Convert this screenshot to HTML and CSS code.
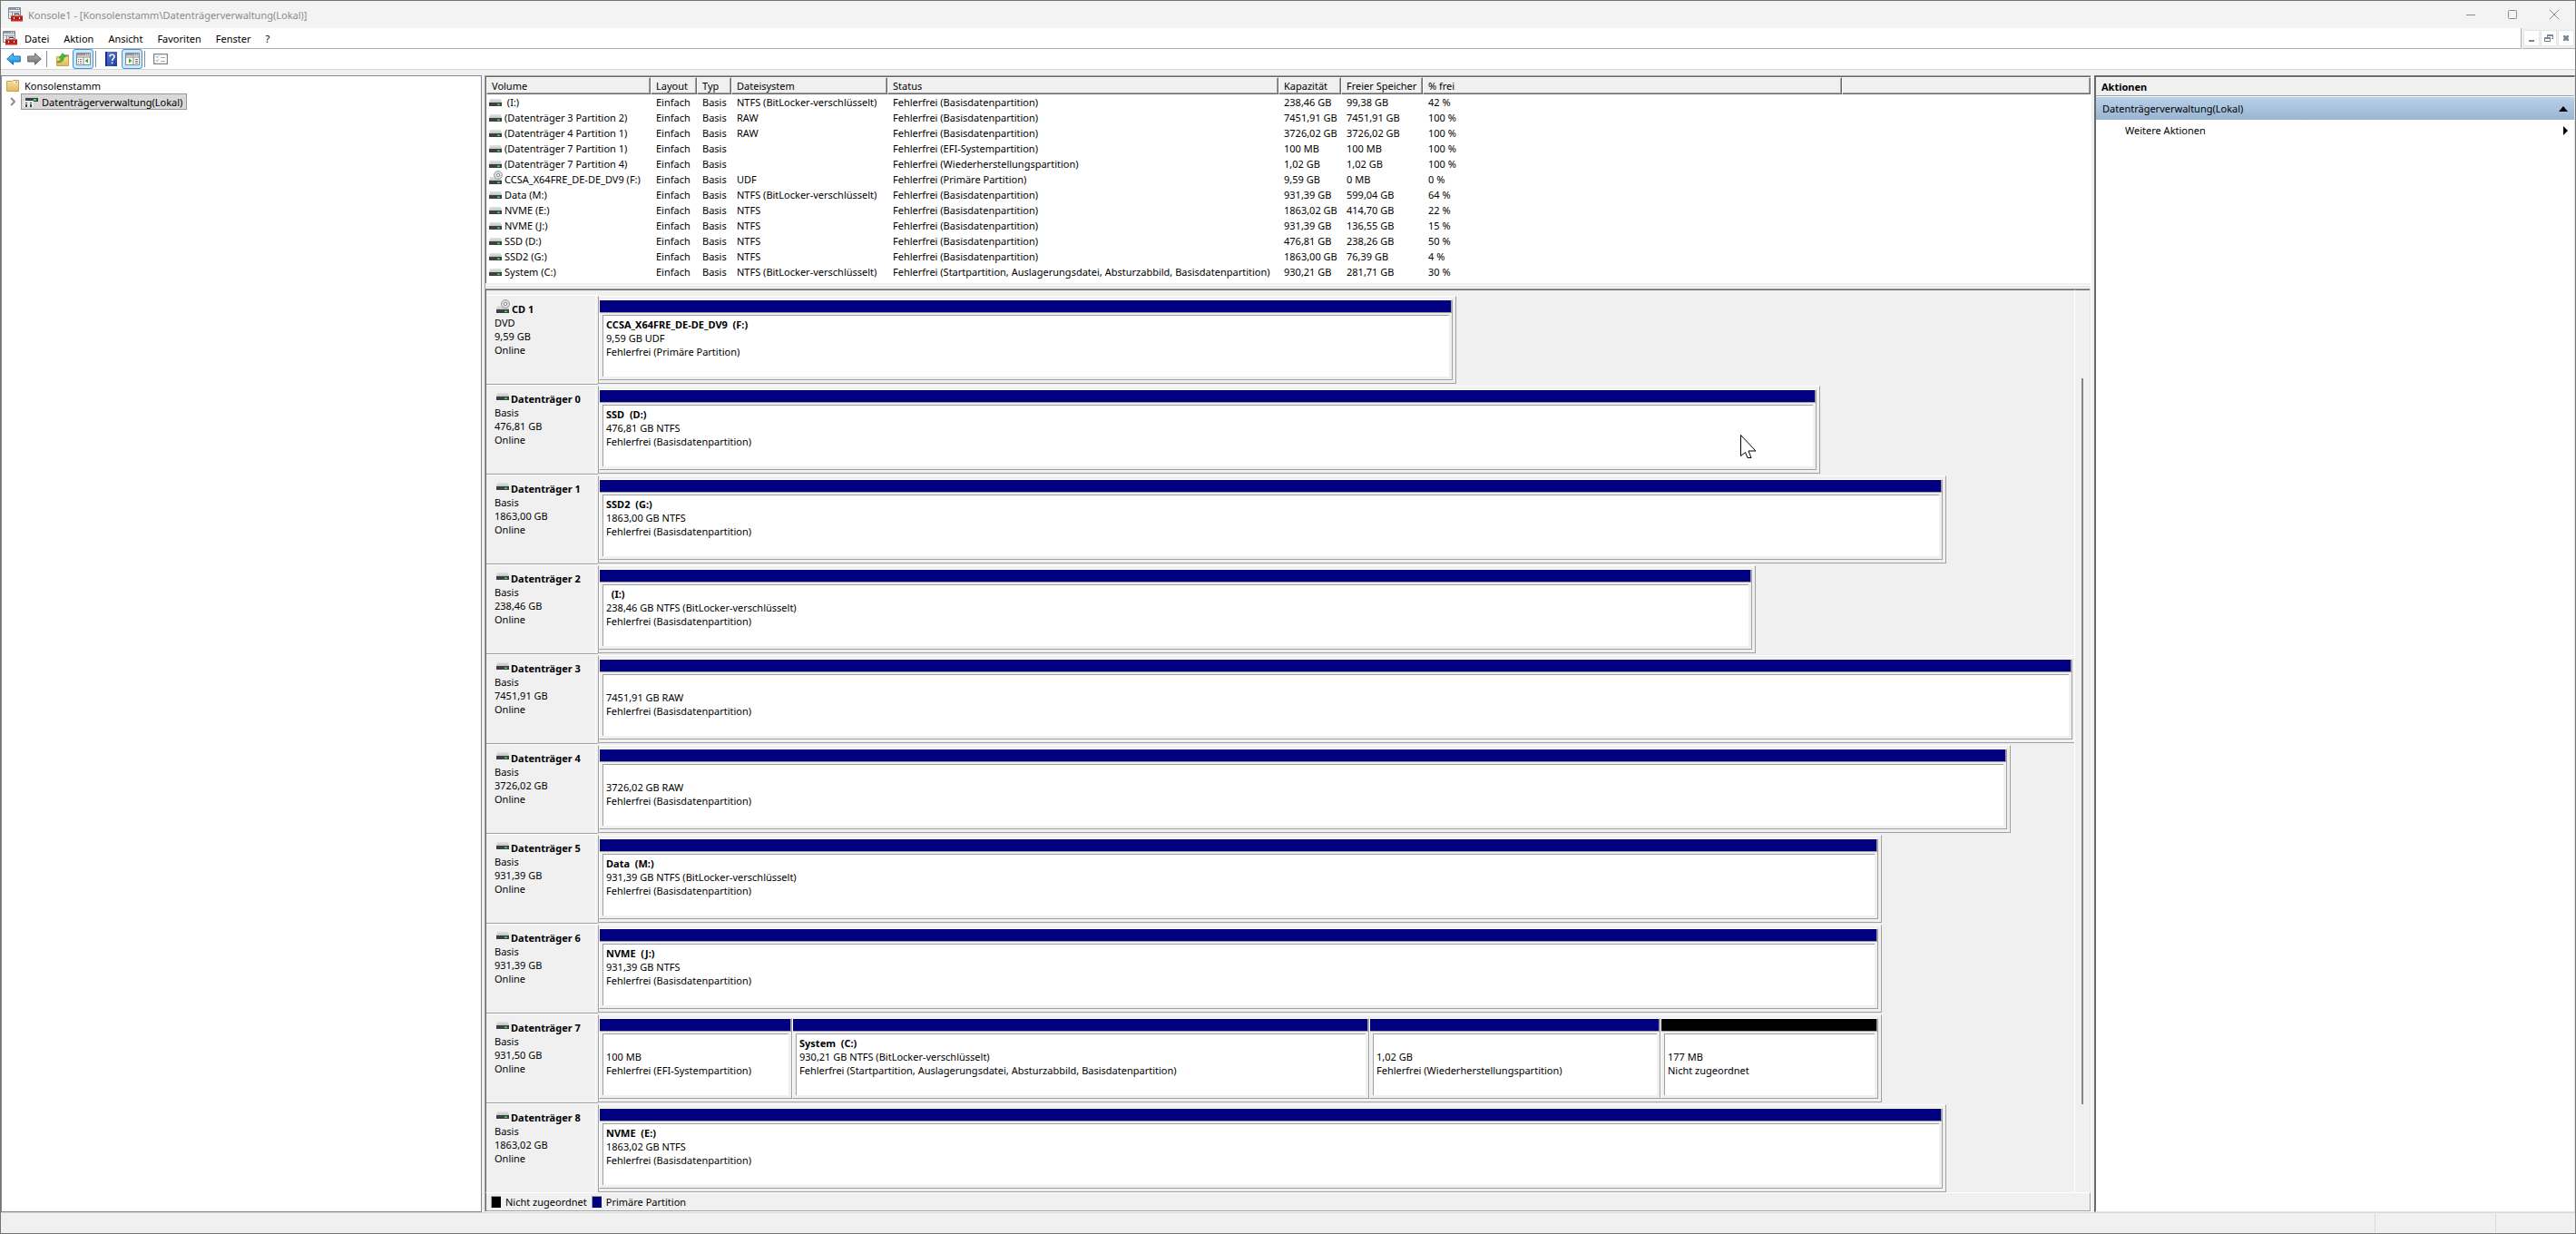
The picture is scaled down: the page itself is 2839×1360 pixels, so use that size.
FILE: index.html
```html
<!DOCTYPE html>
<html lang="de">
<head>
  <meta charset="utf-8" />
  <title>Konsole1 - [Konsolenstamm\Datenträgerverwaltung(Lokal)]</title>
  <meta name="viewport" content="width=device-width, initial-scale=1.0">
  <link rel="stylesheet" href="styles.css">
</head>
<body>
  <!-- shared icons -->
  <svg class="sprite" aria-hidden="true">
    <defs>
      <linearGradient id="gLid" x1="0" y1="0" x2="0" y2="1">
        <stop offset="0" stop-color="#e2e3e6"/><stop offset="1" stop-color="#c3c5ca"/>
      </linearGradient>
      <linearGradient id="gFolder" x1="0" y1="0" x2="0" y2="1">
        <stop offset="0" stop-color="#fbe3a0"/><stop offset="1" stop-color="#e3b95c"/>
      </linearGradient>
      <linearGradient id="gBack" x1="0" y1="0" x2="0" y2="1">
        <stop offset="0" stop-color="#6fd0f8"/><stop offset="1" stop-color="#1583d6"/>
      </linearGradient>
      <linearGradient id="gFwd" x1="0" y1="0" x2="0" y2="1">
        <stop offset="0" stop-color="#b4b4b4"/><stop offset="1" stop-color="#6e6e6e"/>
      </linearGradient>
      <linearGradient id="gHelp" x1="0" y1="0" x2="1" y2="1">
        <stop offset="0" stop-color="#5b86e0"/><stop offset="1" stop-color="#1c36a0"/>
      </linearGradient>
    </defs>
    <symbol id="i-disk" viewBox="0 0 14 8">
      <path d="M1 0h12l1 4H0z" fill="url(#gLid)"/>
      <path d="M0 4h14v4H0z" fill="#3d3f42"/>
      <path d="M9 5.500h3v1.500H9z" fill="#3fe04a"/>
    </symbol>
    <symbol id="i-cd" viewBox="0 0 15 15">
      <path d="M1 7h12l1 4H0z" fill="url(#gLid)"/>
      <path d="M0 11h14v4H0z" fill="#3d3f42"/>
      <path d="M9 12.500h3V14H9z" fill="#3fe04a"/>
      <circle cx="10" cy="5" r="4.500" fill="#d9dbde" stroke="#9b9da1"/>
      <circle cx="10" cy="5" r="1.600" fill="#fff" stroke="#8d8f93"/>
    </symbol>
    <symbol id="i-mmc" viewBox="0 0 16 16">
      <path d="M.5.500h13v12H.5z" fill="#fff" stroke="#7d8794"/>
      <path d="M1 1h12v2H1z" fill="#8d99a8"/>
      <path d="M9 1.500h1M11 1.500h1" stroke="#fff"/>
      <path d="M1 5h12M4.500 5v7" stroke="#7d8794"/>
      <path d="M2 7.500h1M2 9.500h1M6 6.500h6" stroke="#a3adba"/>
      <path d="M7 10V7.500h5V10" fill="none" stroke="#45484d"/>
      <path d="M3 9h13v6.500H3z" fill="#c5261f"/>
      <path d="M3 9.500h13" stroke="#e2574f"/>
      <path d="M3 12h13" stroke="#8d1410"/>
      <path d="M6 11h1v2H6zM12 11h1v2h-1z" fill="#fff"/>
    </symbol>
    <symbol id="i-folder" viewBox="0 0 14 13">
      <path d="M.5 1.500h6l1-1h6v12H.5z" fill="url(#gFolder)" stroke="#c9a150"/>
      <path d="M8.500 2h4v1.500h-4z" fill="#fff"/>
      <path d="M10 2h2v1h-2z" fill="#4aa3e0"/>
    </symbol>
  </svg>

  <div class="window">
    <header class="titlebar">
      <svg class="app-icon" width="16" height="16"><use href="#i-mmc"/></svg>
      <span class="title">Konsole1 - [Konsolenstamm\Datenträgerverwaltung(Lokal)]</span>
      <div class="win-buttons">
        <button aria-label="Minimieren"><svg width="10" height="10"><path d="M0 5.500h10"/></svg></button>
        <button aria-label="Maximieren"><svg width="10" height="10"><rect x=".5" y=".5" width="9" height="9" rx="1"/></svg></button>
        <button aria-label="Schließen"><svg width="10" height="10"><path d="M0 0l10 10M10 0L0 10"/></svg></button>
      </div>
    </header>

    <nav class="menubar">
      <div class="menus">
        <svg class="app-icon" width="16" height="16"><use href="#i-mmc"/></svg>
        <button>Datei</button>
        <button>Aktion</button>
        <button>Ansicht</button>
        <button>Favoriten</button>
        <button>Fenster</button>
        <button>?</button>
      </div>
      <div class="mdi-buttons">
        <button aria-label="Fenster minimieren"><svg width="10" height="10"><path d="M2 7h6v2H2z"/></svg></button>
        <button aria-label="Fenster wiederherstellen"><svg width="10" height="10"><path d="M3 1h7v5H8V5h1V3H4v1H3zM0 4h7v5H0zM1 6v2h5V6z" fill-rule="evenodd"/></svg></button>
        <button aria-label="Fenster schließen"><svg width="10" height="10"><path d="M2 2h2l1 1 1-1h2v2L7 5l1 1v2H6L5 7 4 8H2V6l1-1-1-1z"/></svg></button>
      </div>
    </nav>

    <div class="toolbar">
      <button aria-label="Zurück"><svg width="16" height="14"><path d="M.7 7L7.500.8V4h7.800v6H7.500v3.200z" fill="url(#gBack)" stroke="#1670b8"/></svg></button>
      <button aria-label="Vorwärts"><svg width="16" height="14"><path d="M15.300 7L8.500.8V4H.7v6h7.800v3.200z" fill="url(#gFwd)" stroke="#686868"/></svg></button>
      <span class="sep"></span>
      <button aria-label="Eine Ebene nach oben"><svg width="14" height="15"><path d="M.5 4.500h5l1-2h7v12H.5z" fill="url(#gFolder)" stroke="#c9a150"/><path d="M9 3h4v1.500H9z" fill="#4aa3e0"/><path d="M1 10c3 0 4-2 4-4H3l4-5.500L10.500 5H8.500c0 4-3 6-7 6z" fill="#4fb92b" stroke="#2d8a17" stroke-width=".5"/></svg></button>
      <button class="on" aria-label="Konsolenstruktur ein-/ausblenden"><svg width="16" height="14"><path d="M.5.500h15v13H.5z" fill="#fff" stroke="#858585"/><path d="M1 1h14v2.500H1z" fill="#999"/><path d="M10 2h1M12 2h1M14 2h1" stroke="#fff"/><path d="M1 5h14M8 5v8" stroke="#858585"/><path d="M2 7.500h1M2 9.500h1M2 11.500h1M4 7.500h2M4 9.500h2M4 11.500h2" stroke="#777"/><path d="M13 6.500v5L9.500 9z" fill="#3aa820"/></svg></button>
      <span class="sep"></span>
      <button aria-label="Hilfe"><svg width="13" height="16"><path d="M0 0h13v16H0z" fill="url(#gHelp)"/><path d="M0 0h2v16H0z" fill="#1a2f8c"/><path d="M5 5.500c0-3 5-3 5 0 0 2-2.400 2-2.400 4.500M7.600 11.500v1.700" stroke="#fff" stroke-width="1.600" fill="none"/></svg></button>
      <button class="on" aria-label="Aktionsbereich ein-/ausblenden"><svg width="16" height="14"><path d="M.5.500h15v13H.5z" fill="#fff" stroke="#858585"/><path d="M1 1h14v2.500H1z" fill="#999"/><path d="M10 2h1M12 2h1M14 2h1" stroke="#fff"/><path d="M1 5h14M9 5v8" stroke="#858585"/><path d="M11 7.500h3M11 9.500h3M11 11.500h3" stroke="#777"/><path d="M4 6.500v5L7.500 9z" fill="#3aa820"/></svg></button>
      <span class="sep"></span>
      <button aria-label="Einstellungen"><svg width="16" height="12"><path d="M.5.500h15v11H.5z" fill="#fff" stroke="#858585" stroke-width="1.500"/><path d="M3 3.500l1 1 2-2M3 7.500l1 1 2-2" fill="none" stroke="#2f8fe0"/><path d="M8 4.500h5M8 8.500h5" stroke="#aaa"/></svg></button>
    </div>

    <main class="panes">
      <aside class="tree">
        <div class="tree-row">
          <svg width="14" height="13"><use href="#i-folder"/></svg>
          <span>Konsolenstamm</span>
        </div>
        <div class="tree-row tree-child">
          <svg class="chevron" width="6" height="10"><path d="M1 1l4 4-4 4"/></svg>
          <button class="tree-selected">
            <svg width="16" height="14"><path d="M3 0h12l1 3H2z" fill="url(#gLid)"/><path d="M2 3h14v4H2z" fill="#3d3f42"/><path d="M11 4h3v2h-3z" fill="#3fe04a"/><path d="M0 6h11v7H0z" fill="#e9e9e9"/><path d="M2 8h2v1H2zM7 8h2v1H7zM2 10h2v3H2zM7 10h2v3H7z" fill="#3d3f42"/></svg>
            Datenträgerverwaltung(Lokal)
          </button>
        </div>
      </aside>

      <section class="center">
        <div class="volumes">
          <table>
            <colgroup>
              <col class="c-volume"><col class="c-layout"><col class="c-type"><col class="c-fs"><col class="c-status"><col class="c-cap"><col class="c-free"><col class="c-pct"><col>
            </colgroup>
            <thead>
              <tr><th>Volume</th><th>Layout</th><th>Typ</th><th>Dateisystem</th><th>Status</th><th>Kapazität</th><th>Freier Speicher</th><th>% frei</th><th></th></tr>
            </thead>
            <tbody>
              <tr><td><svg width="14" height="8"><use href="#i-disk"/></svg>&nbsp;(I:)</td><td>Einfach</td><td>Basis</td><td>NTFS (BitLocker-verschlüsselt)</td><td>Fehlerfrei (Basisdatenpartition)</td><td>238,46 GB</td><td>99,38 GB</td><td>42 %</td><td></td></tr>
              <tr><td><svg width="14" height="8"><use href="#i-disk"/></svg>(Datenträger 3 Partition 2)</td><td>Einfach</td><td>Basis</td><td>RAW</td><td>Fehlerfrei (Basisdatenpartition)</td><td>7451,91 GB</td><td>7451,91 GB</td><td>100 %</td><td></td></tr>
              <tr><td><svg width="14" height="8"><use href="#i-disk"/></svg>(Datenträger 4 Partition 1)</td><td>Einfach</td><td>Basis</td><td>RAW</td><td>Fehlerfrei (Basisdatenpartition)</td><td>3726,02 GB</td><td>3726,02 GB</td><td>100 %</td><td></td></tr>
              <tr><td><svg width="14" height="8"><use href="#i-disk"/></svg>(Datenträger 7 Partition 1)</td><td>Einfach</td><td>Basis</td><td></td><td>Fehlerfrei (EFI-Systempartition)</td><td>100 MB</td><td>100 MB</td><td>100 %</td><td></td></tr>
              <tr><td><svg width="14" height="8"><use href="#i-disk"/></svg>(Datenträger 7 Partition 4)</td><td>Einfach</td><td>Basis</td><td></td><td>Fehlerfrei (Wiederherstellungspartition)</td><td>1,02 GB</td><td>1,02 GB</td><td>100 %</td><td></td></tr>
              <tr><td><svg class="cd" width="15" height="15"><use href="#i-cd"/></svg>CCSA_X64FRE_DE-DE_DV9 (F:)</td><td>Einfach</td><td>Basis</td><td>UDF</td><td>Fehlerfrei (Primäre Partition)</td><td>9,59 GB</td><td>0 MB</td><td>0 %</td><td></td></tr>
              <tr><td><svg width="14" height="8"><use href="#i-disk"/></svg>Data (M:)</td><td>Einfach</td><td>Basis</td><td>NTFS (BitLocker-verschlüsselt)</td><td>Fehlerfrei (Basisdatenpartition)</td><td>931,39 GB</td><td>599,04 GB</td><td>64 %</td><td></td></tr>
              <tr><td><svg width="14" height="8"><use href="#i-disk"/></svg>NVME (E:)</td><td>Einfach</td><td>Basis</td><td>NTFS</td><td>Fehlerfrei (Basisdatenpartition)</td><td>1863,02 GB</td><td>414,70 GB</td><td>22 %</td><td></td></tr>
              <tr><td><svg width="14" height="8"><use href="#i-disk"/></svg>NVME (J:)</td><td>Einfach</td><td>Basis</td><td>NTFS</td><td>Fehlerfrei (Basisdatenpartition)</td><td>931,39 GB</td><td>136,55 GB</td><td>15 %</td><td></td></tr>
              <tr><td><svg width="14" height="8"><use href="#i-disk"/></svg>SSD (D:)</td><td>Einfach</td><td>Basis</td><td>NTFS</td><td>Fehlerfrei (Basisdatenpartition)</td><td>476,81 GB</td><td>238,26 GB</td><td>50 %</td><td></td></tr>
              <tr><td><svg width="14" height="8"><use href="#i-disk"/></svg>SSD2 (G:)</td><td>Einfach</td><td>Basis</td><td>NTFS</td><td>Fehlerfrei (Basisdatenpartition)</td><td>1863,00 GB</td><td>76,39 GB</td><td>4 %</td><td></td></tr>
              <tr><td><svg width="14" height="8"><use href="#i-disk"/></svg>System (C:)</td><td>Einfach</td><td>Basis</td><td>NTFS (BitLocker-verschlüsselt)</td><td>Fehlerfrei (Startpartition, Auslagerungsdatei, Absturzabbild, Basisdatenpartition)</td><td>930,21 GB</td><td>281,71 GB</td><td>30 %</td><td></td></tr>
            </tbody>
          </table>
        </div>
        <div class="splitter"></div>

        <div class="disk-view">
          <div class="disks">
            <div class="disk">
              <div class="disk-label"><h2><svg class="cd" width="15" height="15"><use href="#i-cd"/></svg>CD 1</h2><p>DVD</p><p>9,59 GB</p><p>Online</p></div>
              <div class="track"><div class="parts" style="width: 58.14%">
                <div class="part"><div class="bar"></div><div class="info"><h3>CCSA_X64FRE_DE-DE_DV9&nbsp; (F:)</h3><p>9,59 GB UDF</p><p>Fehlerfrei (Primäre Partition)</p></div></div>
              </div></div>
            </div>
            <div class="disk">
              <div class="disk-label"><h2><svg width="14" height="8"><use href="#i-disk"/></svg>Datenträger 0</h2><p>Basis</p><p>476,81 GB</p><p>Online</p></div>
              <div class="track"><div class="parts" style="width: 82.79%">
                <div class="part"><div class="bar"></div><div class="info"><h3>SSD&nbsp; (D:)</h3><p>476,81 GB NTFS</p><p>Fehlerfrei (Basisdatenpartition)</p></div></div>
              </div></div>
            </div>
            <div class="disk">
              <div class="disk-label"><h2><svg width="14" height="8"><use href="#i-disk"/></svg>Datenträger 1</h2><p>Basis</p><p>1863,00 GB</p><p>Online</p></div>
              <div class="track"><div class="parts" style="width: 91.33%">
                <div class="part"><div class="bar"></div><div class="info"><h3>SSD2&nbsp; (G:)</h3><p>1863,00 GB NTFS</p><p>Fehlerfrei (Basisdatenpartition)</p></div></div>
              </div></div>
            </div>
            <div class="disk">
              <div class="disk-label"><h2><svg width="14" height="8"><use href="#i-disk"/></svg>Datenträger 2</h2><p>Basis</p><p>238,46 GB</p><p>Online</p></div>
              <div class="track"><div class="parts" style="width: 78.43%">
                <div class="part"><div class="bar"></div><div class="info"><h3>&nbsp; (I:)</h3><p>238,46 GB NTFS (BitLocker-verschlüsselt)</p><p>Fehlerfrei (Basisdatenpartition)</p></div></div>
              </div></div>
            </div>
            <div class="disk">
              <div class="disk-label"><h2><svg width="14" height="8"><use href="#i-disk"/></svg>Datenträger 3</h2><p>Basis</p><p>7451,91 GB</p><p>Online</p></div>
              <div class="track"><div class="parts full" style="width: 100%">
                <div class="part"><div class="bar"></div><div class="info"><h3>&nbsp;</h3><p>7451,91 GB RAW</p><p>Fehlerfrei (Basisdatenpartition)</p></div></div>
              </div></div>
            </div>
            <div class="disk">
              <div class="disk-label"><h2><svg width="14" height="8"><use href="#i-disk"/></svg>Datenträger 4</h2><p>Basis</p><p>3726,02 GB</p><p>Online</p></div>
              <div class="track"><div class="parts" style="width: 95.7%">
                <div class="part"><div class="bar"></div><div class="info"><h3>&nbsp;</h3><p>3726,02 GB RAW</p><p>Fehlerfrei (Basisdatenpartition)</p></div></div>
              </div></div>
            </div>
            <div class="disk">
              <div class="disk-label"><h2><svg width="14" height="8"><use href="#i-disk"/></svg>Datenträger 5</h2><p>Basis</p><p>931,39 GB</p><p>Online</p></div>
              <div class="track"><div class="parts" style="width: 86.97%">
                <div class="part"><div class="bar"></div><div class="info"><h3>Data&nbsp; (M:)</h3><p>931,39 GB NTFS (BitLocker-verschlüsselt)</p><p>Fehlerfrei (Basisdatenpartition)</p></div></div>
              </div></div>
            </div>
            <div class="disk">
              <div class="disk-label"><h2><svg width="14" height="8"><use href="#i-disk"/></svg>Datenträger 6</h2><p>Basis</p><p>931,39 GB</p><p>Online</p></div>
              <div class="track"><div class="parts" style="width: 86.97%">
                <div class="part"><div class="bar"></div><div class="info"><h3>NVME&nbsp; (J:)</h3><p>931,39 GB NTFS</p><p>Fehlerfrei (Basisdatenpartition)</p></div></div>
              </div></div>
            </div>
            <div class="disk">
              <div class="disk-label"><h2><svg width="14" height="8"><use href="#i-disk"/></svg>Datenträger 7</h2><p>Basis</p><p>931,50 GB</p><p>Online</p></div>
              <div class="track"><div class="parts" style="width: 86.97%">
                <div class="part" style="flex-grow: 211"><div class="bar"></div><div class="info"><h3>&nbsp;</h3><p>100 MB</p><p>Fehlerfrei (EFI-Systempartition)</p></div></div>
                <div class="part" style="flex-grow: 634"><div class="bar"></div><div class="info"><h3>System&nbsp; (C:)</h3><p>930,21 GB NTFS (BitLocker-verschlüsselt)</p><p>Fehlerfrei (Startpartition, Auslagerungsdatei, Absturzabbild, Basisdatenpartition)</p></div></div>
                <div class="part" style="flex-grow: 319"><div class="bar"></div><div class="info"><h3>&nbsp;</h3><p>1,02 GB</p><p>Fehlerfrei (Wiederherstellungspartition)</p></div></div>
                <div class="part" style="flex-grow: 238"><div class="bar free"></div><div class="info"><h3>&nbsp;</h3><p>177 MB</p><p>Nicht zugeordnet</p></div></div>
              </div></div>
            </div>
            <div class="disk">
              <div class="disk-label"><h2><svg width="14" height="8"><use href="#i-disk"/></svg>Datenträger 8</h2><p>Basis</p><p>1863,02 GB</p><p>Online</p></div>
              <div class="track"><div class="parts" style="width: 91.33%">
                <div class="part"><div class="bar"></div><div class="info"><h3>NVME&nbsp; (E:)</h3><p>1863,02 GB NTFS</p><p>Fehlerfrei (Basisdatenpartition)</p></div></div>
              </div></div>
            </div>
          </div>
          <div class="scrollbar"><div class="thumb"></div></div>
        </div>
        <div class="legend">
          <span class="swatch free"></span><span>Nicht zugeordnet</span>
          <span class="swatch"></span><span>Primäre Partition</span>
        </div>
      </section>

      <aside class="actions">
        <h2>Aktionen</h2>
        <button class="group">Datenträgerverwaltung(Lokal)<svg width="10" height="6"><path d="M5 0l5 6H0z"/></svg></button>
        <button class="more">Weitere Aktionen<svg width="5" height="10"><path d="M0 0l5 5-5 5z"/></svg></button>
      </aside>
    </main>

    <footer class="statusbar"><span></span><span></span><span></span></footer>
  </div>

  <svg class="cursor" width="20" height="28"><path d="M1.500 1.500v23l5-4 2.500 6h4l-3-7.500h8z"/></svg>
</body>
</html>
```
FILE: styles.css
```css
:root {
  --face: #f0f0f0;
  --shadow: #a0a0a0;
  --dark: #696969;
  --light: #e3e3e3;
  --navy: #000080;
  --line: #d7d7d7;
}
* {
  box-sizing: border-box;
}
html, body {
  height: 100%;
  margin: 0;
}
body {
  position: relative;
  background: var(--face);
  color: #000;
  font-family: 'Segoe UI', 'Noto Sans', 'Open Sans', sans-serif;
  font-size: 11px;
  line-height: 15px;
  overflow: hidden;
}
h2, h3, p {
  margin: 0;
  font-size: 11px;
  line-height: 15px;
}
button {
  background: none;
  border: none;
  padding: 0;
  margin: 0;
  font: inherit;
  color: inherit;
}
svg {
  display: block;
  flex: none;
}
.sprite {
  position: absolute;
  width: 0;
  height: 0;
}
.window {
  display: flex;
  flex-direction: column;
  height: 100vh;
  border: 1px solid #747474;
}

/* title bar, menu, toolbar */
.titlebar {
  display: flex;
  align-items: center;
  height: 30px;
  padding-left: 8px;
  background: #f3f3f3;
  color: #8b8b8b;
}
.title {
  flex: 1;
  margin-left: 6px;
}
.win-buttons {
  display: flex;
  height: 100%;
}
.win-buttons button {
  width: 46px;
  display: flex;
  align-items: center;
  justify-content: center;
}
.win-buttons svg {
  fill: none;
  stroke: #8b8b8b;
}
.menubar {
  display: flex;
  gap: 1px;
  height: 23px;
}
.menus {
  flex: 1;
  display: flex;
  align-items: center;
  background: #fff;
  border-right: 1px solid #a9b1bd;
  border-bottom: 1px solid #a9b1bd;
  padding-left: 2px;
}
.menus button {
  padding: 0 8px;
}
.mdi-buttons {
  display: flex;
  align-items: center;
  gap: 1px;
  padding: 0 1px;
  border-bottom: 1px solid #a9b1bd;
}
.mdi-buttons button {
  display: flex;
  align-items: center;
  justify-content: center;
  width: 18px;
  height: 18px;
  background: #fff;
  border: 1px solid #e6e6e6;
}
.mdi-buttons svg {
  fill: #7a8797;
}
.toolbar {
  display: flex;
  align-items: center;
  height: 23px;
  padding-left: 2px;
  background: #fff;
  border-bottom: 1px solid var(--line);
}
.toolbar button {
  display: flex;
  align-items: center;
  justify-content: center;
  width: 23px;
  height: 22px;
}
.toolbar .on {
  background: #cce6fa;
  border: 1px solid #3f95dc;
  border-radius: 3px;
}
.sep {
  width: 1px;
  height: 18px;
  margin: 0 5px 0 2px;
  background: #8c8c8c;
}

/* three panes */
.panes {
  flex: 1;
  min-height: 0;
  display: grid;
  grid-template-columns: 530px minmax(0, 1fr) 530px;
  gap: 3px;
  padding-top: 6px;
}
.tree {
  background: #fff;
  border: 1px solid #828790;
  padding-top: 1px;
}
.tree-row {
  display: flex;
  align-items: center;
  height: 18px;
  gap: 6px;
  padding-left: 5px;
}
.tree-child {
  padding-left: 9px;
}
.chevron {
  fill: none;
  stroke: #8f8f8f;
  stroke-width: 2;
}
.tree-selected {
  display: flex;
  align-items: center;
  gap: 4px;
  height: 18px;
  padding: 0 4px 0 2px;
  background: #d9d9d9;
  border: 1px solid #999;
}
.center {
  display: flex;
  flex-direction: column;
  min-width: 0;
  min-height: 0;
  border: 1px solid;
  border-color: var(--shadow) #fff #fff var(--shadow);
}
.volumes {
  background: #fff;
  border-top: 1px solid var(--dark);
  border-left: 1px solid var(--dark);
  padding-bottom: 4px;
}
table {
  width: 100%;
  table-layout: fixed;
  border-collapse: separate;
  border-spacing: 0;
}
th, td {
  padding: 0 0 0 6px;
  text-align: left;
  font-weight: 400;
  white-space: nowrap;
}
th {
  height: 19px;
  background: var(--face);
  border-top: 1px solid #fff;
  border-left: 1px solid #fff;
  border-right: 1px solid var(--dark);
  border-bottom: 1px solid var(--dark);
  box-shadow: inset 0 -1px var(--shadow), inset -1px 0 var(--shadow);
  padding-left: 5px;
}
td {
  height: 17px;
}
td:first-child {
  padding-left: 3px;
}
td svg {
  display: inline-block;
  margin-right: 3px;
}
td .cd {
  margin: -6px 2px -1px 0;
}
.c-volume { width: 181px; }
.c-layout { width: 51px; }
.c-type { width: 38px; }
.c-fs { width: 172px; }
.c-status { width: 431px; }
.c-cap { width: 69px; }
.c-free { width: 90px; }
.c-pct { width: 462px; }
.splitter {
  height: 6px;
  border-top: 2px solid var(--face);
  background: linear-gradient(#fff 1px, var(--light) 1px, var(--light) 2px, var(--face) 2px);
}

/* graphical view */
.disk-view {
  flex: 1;
  min-height: 0;
  display: flex;
  border-top: 1px solid var(--shadow);
  border-left: 1px solid var(--dark);
  border-right: 1px solid var(--light);
}
.disks {
  flex: 1;
  min-width: 0;
  overflow: hidden;
  padding-top: 5px;
  border-top: 1px solid var(--dark);
  border-right: 1px solid #fff;
}
.disk {
  display: flex;
}
.disk-label {
  width: 123px;
  padding: 7px 0 0 9px;
  border-top: 1px solid #fff;
  border-bottom: 1px solid var(--shadow);
  background: linear-gradient(#fff, #fff) 120px 0 / 1px 100% no-repeat;
}
.disk-label h2 {
  display: flex;
  align-items: center;
  gap: 2px;
  padding-left: 2px;
}
.disk-label svg {
  margin-bottom: 6px;
}
.disk-label .cd {
  margin: -6px 0 0 0;
}
.track {
  flex: 1;
  min-width: 0;
  padding: 1px 0;
}
.parts {
  display: flex;
  padding: 3px 3px 3px 0;
  border: 1px solid var(--shadow);
  border-top-color: #fff;
}
.parts.full {
  border-right: none;
  padding-right: 2px;
}
.part {
  flex: 1 1 0;
  min-width: 0;
  border: 1px solid;
  border-color: #fff var(--shadow) var(--shadow) #fff;
}
.bar {
  height: 14px;
  background: var(--navy);
  border-right: 1px solid var(--shadow);
  border-bottom: 1px solid var(--shadow);
}
.bar.free {
  background-color: #000;
}
.info {
  height: 68px;
  margin: 2px 3px 3px;
  padding: 2px 0 0 3px;
  background: #fff;
  border-top: 1px solid var(--shadow);
  border-left: 1px solid var(--shadow);
  white-space: nowrap;
  overflow: hidden;
}
.scrollbar {
  width: 16px;
  padding: 97px 0 97px 7px;
  border-top: 1px solid var(--dark);
}
.thumb {
  width: 2px;
  height: 100%;
  background: #858585;
}
.legend {
  display: flex;
  align-items: center;
  gap: 5px;
  height: 21px;
  padding: 0 0 1px 5px;
  border-top: 1px solid #fff;
  border-left: 1px solid var(--dark);
  border-right: 1px solid var(--shadow);
  border-bottom: 1px solid var(--shadow);
}
.swatch {
  width: 11px;
  height: 13px;
  background: var(--navy);
  border-top: 1px solid var(--shadow);
  border-left: 1px solid var(--shadow);
}
.swatch.free {
  background: #000;
}

/* actions pane */
.actions {
  background: #fff;
  border-style: solid;
  border-width: 2px 1px 1px 2px;
  border-color: var(--dark) var(--light) var(--light) var(--dark);
}
.actions h2 {
  height: 21px;
  padding: 2px 0 0 6px;
  background: var(--face);
  border-top: 1px solid #fff;
  border-bottom: 1px solid var(--shadow);
}
.actions button {
  display: flex;
  align-items: center;
  justify-content: space-between;
  width: 100%;
  height: 25px;
  padding: 0 7px;
}
.actions .group {
  margin-top: 1px;
  background: linear-gradient(#b9d1ea, #99b4d1);
}
.actions .more {
  height: 23px;
  padding-left: 32px;
}

.statusbar {
  display: flex;
  height: 23px;
  padding: 1px 0;
  border-top: 1px solid var(--line);
}
.statusbar span {
  border-right: 1px solid var(--line);
}
.statusbar span:first-child {
  flex: 1;
}
.statusbar span:nth-child(2) {
  width: 133px;
}
.statusbar span:last-child {
  width: 87px;
  border-right: none;
}
.cursor {
  position: absolute;
  left: 1917px;
  top: 478px;
  fill: #fff;
  stroke: #000;
}
```
